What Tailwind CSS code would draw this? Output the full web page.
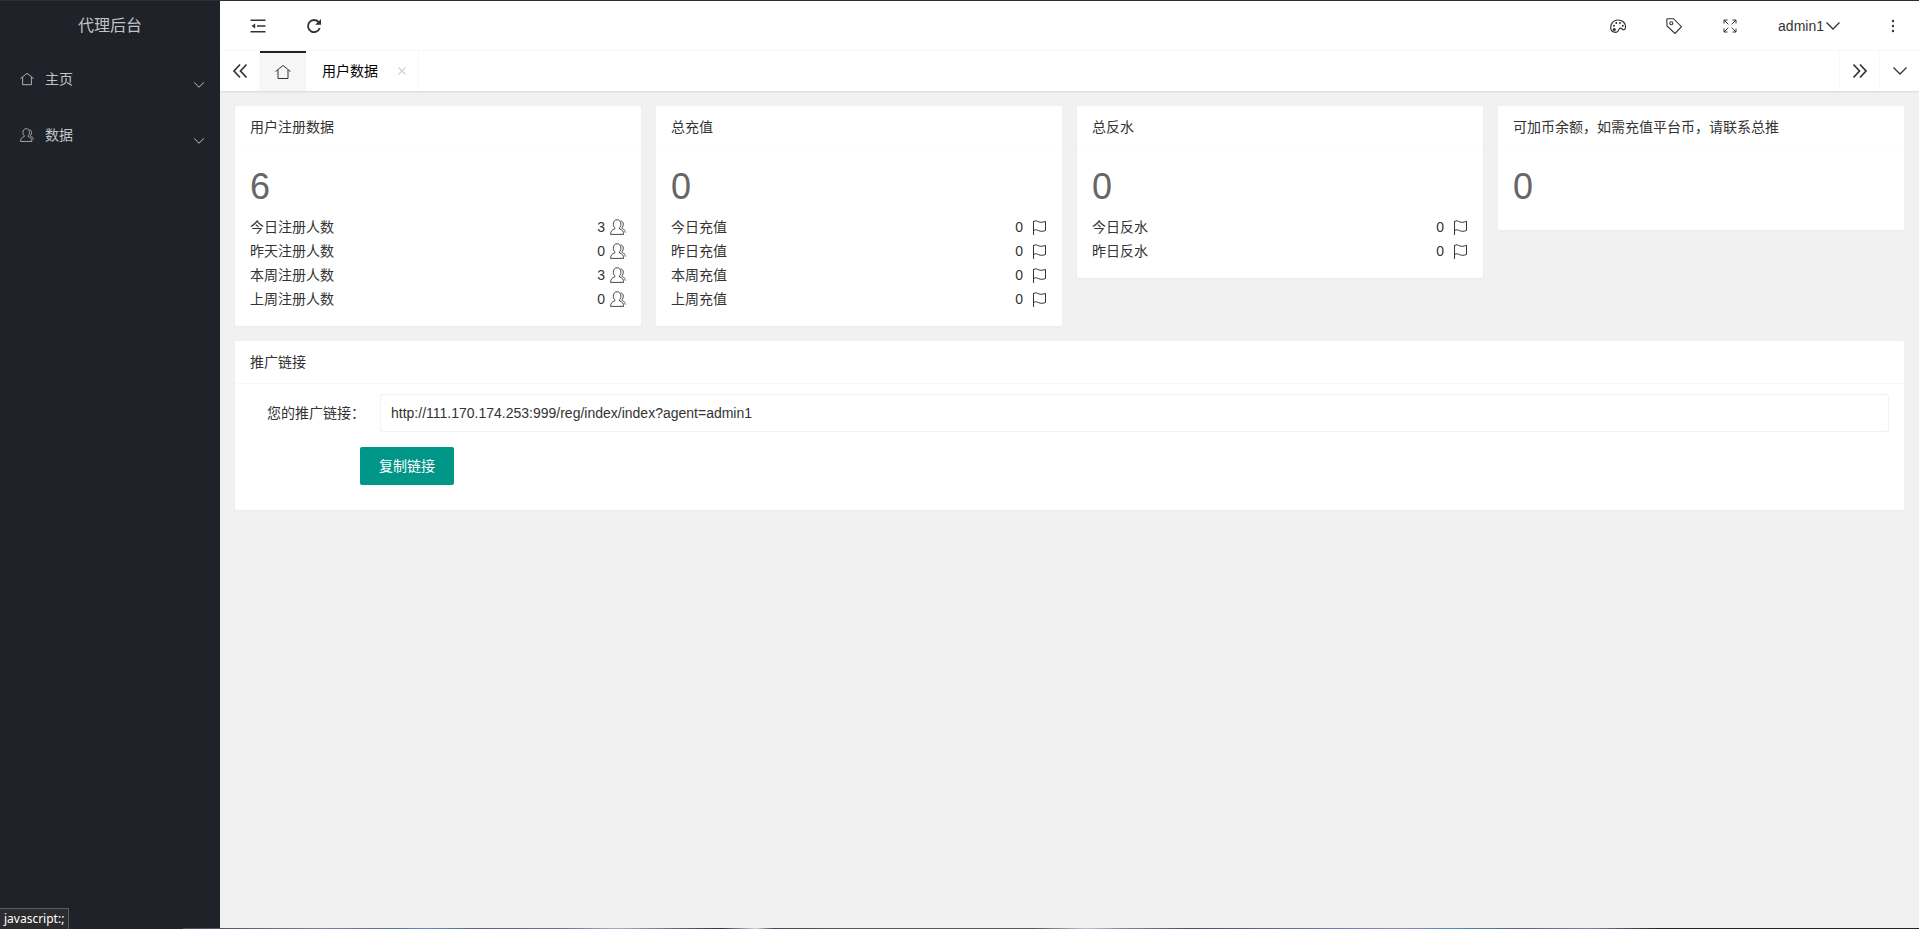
<!DOCTYPE html>
<html lang="zh-CN">
<head>
  <meta charset="UTF-8" />
  <meta name="viewport" content="width=device-width, initial-scale=1.0"/>
  <title>代理后台</title>
  <script src="https://cdn.jsdelivr.net/npm/@tailwindcss/browser@4"></script>
</head>
<body class="relative min-h-screen flex flex-col border-t border-[#2f2e35] bg-[#f1f1f1] font-['Liberation_Sans','Noto_Sans_CJK_SC',sans-serif] text-sm text-[#333]">

  <!-- Icon symbols -->
  <svg class="hidden">
    <symbol id="home" viewBox="0 0 16 16" fill="none" stroke="currentColor">
      <path d="M.5 7.500 8 1.500l7.500 6M3 6v8.500h10V6"/>
    </symbol>
    <symbol id="user" viewBox="0 0 16 16" fill="none" stroke="currentColor" stroke-width=".9">
      <path d="M.6 15.400h13c0-3-1.300-4.600-4.300-5.600v-.9c1-.8 1.600-2.100 1.600-3.700C10.900 2.600 9.400.7 7.100.7S3.300 2.600 3.300 5.200c0 1.600.6 2.900 1.600 3.700v.9C1.900 10.800.6 12.400.6 15.400z"/>
      <path d="M10.800 1.800c1.700.5 2.500 1.700 2.500 3.400 0 1.500-.5 2.600-1.400 3.400v.6"/>
      <path d="M11.900 9.200c2.300.9 3.400 2.200 3.600 4.600" stroke-width="1.200" opacity=".6"/>
    </symbol>
    <symbol id="flag" viewBox="0 0 16 16" fill="none" stroke="currentColor">
      <path d="M2.500 16V2M2.500 2.500c2.200-1.300 3.800-.3 5.300.4 1.700.7 4 .6 6.700-.6v9.200c-2.700 1.100-5 1-6.700.2-1.500-.7-3.100-1.500-5.300-.2"/>
    </symbol>
    <symbol id="down" viewBox="0 0 16 16" fill="none" stroke="currentColor" stroke-width="1.300">
      <path d="m1.500 4.500 6.500 6.500 6.500-6.500"/>
    </symbol>
    <symbol id="prev" viewBox="0 0 16 16" fill="none" stroke="currentColor" stroke-width="1.700">
      <path d="M8 1.500 2 8l6 6.500M14.500 1.500 8.500 8l6 6.500"/>
    </symbol>
  </svg>

  <div class="flex flex-1">
    <!-- Sidebar -->
    <aside class="w-[220px] shrink-0 flex flex-col bg-[#20222a] text-[#c3c4c7]">
      <div class="h-[50px] flex items-center justify-center text-base">代理后台</div>
      <nav class="flex-1">
        <a href="#" class="h-14 flex items-center pl-5 pr-[15px]">
          <svg class="size-[14px] mr-[11px]"><use href="#home"/></svg>
          <span class="flex-1">主页</span>
          <svg class="size-3 mt-3"><use href="#down" stroke-width="2"/></svg>
        </a>
        <a href="#" class="h-14 flex items-center pl-5 pr-[15px]">
          <svg class="size-[14px] mr-[11px]"><use href="#user"/></svg>
          <span class="flex-1">数据</span>
          <svg class="size-3 mt-3"><use href="#down"/></svg>
        </a>
      </nav>
      <div class="self-start h-[21px] px-1 border-t border-r border-[#5b5c62] bg-[#2c2c2f] font-['Noto_Sans',sans-serif] text-xs leading-5 text-white">javascript:;</div>
    </aside>

    <div class="flex-1 min-w-0">
      <!-- Header -->
      <header class="h-[50px] flex items-center justify-between bg-white border-b border-[#f8f8f8] pl-[30px] pr-[18px]">
        <div class="flex items-center gap-10">
          <button type="button" aria-label="侧边伸缩">
            <svg class="size-4" viewBox="0 0 16 16" fill="none" stroke="currentColor" stroke-width="1.600"><path d="M.5 2.200h15M7 8h8.500M.5 13.800h15"/><path d="M5.200 5.500v5L1.500 8z" fill="currentColor" stroke="none"/></svg>
          </button>
          <button type="button" aria-label="刷新">
            <svg class="size-4" viewBox="0 0 16 16" fill="none" stroke="currentColor" stroke-width="1.900"><path d="M13.700 10A6 6 0 1 1 12.600 4.200"/><path d="M15 1v5.800H9.200z" fill="currentColor" stroke="none"/></svg>
          </button>
        </div>
        <div class="flex items-center gap-10">
          <button type="button" aria-label="主题">
            <svg class="size-4" viewBox="0 0 16 16" fill="none" stroke="currentColor" stroke-width="1.200"><path d="M1.200 12C-.5 7.500 2.500 2 8 2c4.500 0 7.500 3 7.500 7 0 1.800-.5 2.800-1.700 2.800-1.500 0-1.800-1.600-3.300-1.600-2.300 0-1.300 4.100-4.500 4.100-2.300 0-3.900-.6-4.800-2.300z"/><g fill="currentColor" stroke="none"><circle cx="4.300" cy="11.500" r="1.500"/><circle cx="4" cy="7.700" r="1"/><circle cx="6.300" cy="4.900" r="1"/><circle cx="10" cy="4.900" r="1"/><circle cx="12.800" cy="7.700" r="1"/></g></svg>
          </button>
          <button type="button" aria-label="便签">
            <svg class="size-4" viewBox="0 0 16 16" fill="none" stroke="currentColor" stroke-width="1.100"><path d="M.8 1.500Q.8.700 1.600.7h5.900l8 8-6.500 6.800L1 8z"/><circle cx="5.300" cy="5.200" r="1.500"/></svg>
          </button>
          <button type="button" aria-label="全屏">
            <svg class="size-4" viewBox="0 0 16 16" fill="none" stroke="currentColor"><path d="M2 5.500V2h3.500M2 2l4.300 4.300M10.500 2H14v3.500M14 2 9.700 6.300M2 10.500V14h3.500M2 14l4.300-4.300M14 10.500V14h-3.500M14 14l-4.300-4.300"/></svg>
          </button>
          <button type="button" class="flex items-center gap-px">
            <span>admin1</span>
            <svg class="size-4"><use href="#down"/></svg>
          </button>
          <button type="button" aria-label="更多" class="ml-1">
            <svg class="size-4" viewBox="0 0 16 16" fill="currentColor"><circle cx="8" cy="3" r="1.200"/><circle cx="8" cy="8" r="1.200"/><circle cx="8" cy="13" r="1.200"/></svg>
          </button>
        </div>
      </header>

      <!-- Page tabs -->
      <div class="h-10 flex bg-white shadow-[0_1px_2px_rgba(0,0,0,0.1)]">
        <button type="button" aria-label="向左" class="w-10 flex items-center justify-center border-r border-[#f8f8f8]">
          <svg class="size-4"><use href="#prev"/></svg>
        </button>
        <a href="#" aria-label="主页" class="w-[46px] flex items-center justify-center border-t-2 border-[#20222a] bg-[#f6f6f6]">
          <svg class="size-4"><use href="#home"/></svg>
        </a>
        <div class="flex items-center pl-4 pr-2 border-r border-[#f8f8f8]">
          <a href="#" class="text-black">用户数据</a>
          <button type="button" aria-label="关闭" class="ml-4 text-[#d2d2d2]">
            <svg class="size-4" viewBox="0 0 16 16" fill="none" stroke="currentColor" stroke-width="1.300"><path d="m4.500 4.500 7 7m0-7-7 7"/></svg>
          </button>
        </div>
        <button type="button" aria-label="向右" class="w-10 ml-auto flex items-center justify-center border-l border-[#f8f8f8]">
          <svg class="size-4 rotate-180"><use href="#prev"/></svg>
        </button>
        <button type="button" aria-label="标签操作" class="w-10 flex items-center justify-center border-l border-[#f8f8f8]">
          <svg class="size-4"><use href="#down"/></svg>
        </button>
      </div>

      <!-- Content -->
      <main class="p-[15px] flex flex-col gap-[15px]">
        <div class="grid grid-cols-4 items-start gap-[15px]">
          <section class="bg-white rounded-xs shadow-[0_1px_2px_rgba(0,0,0,0.03)]">
            <h2 class="px-[15px] leading-[42px] border-b border-[#fbfbfb]">用户注册数据</h2>
            <div class="p-[15px] leading-6">
              <p class="pt-[5px] pb-[10px] text-4xl leading-9 text-[#666]">6</p>
              <p class="flex items-center">今日注册人数<span class="ml-auto">3</span><svg class="size-4 ml-[5px]"><use href="#user"/></svg></p>
              <p class="flex items-center">昨天注册人数<span class="ml-auto">0</span><svg class="size-4 ml-[5px]"><use href="#user"/></svg></p>
              <p class="flex items-center">本周注册人数<span class="ml-auto">3</span><svg class="size-4 ml-[5px]"><use href="#user"/></svg></p>
              <p class="flex items-center">上周注册人数<span class="ml-auto">0</span><svg class="size-4 ml-[5px]"><use href="#user"/></svg></p>
            </div>
          </section>

          <section class="bg-white rounded-xs shadow-[0_1px_2px_rgba(0,0,0,0.03)]">
            <h2 class="px-[15px] leading-[42px] border-b border-[#fbfbfb]">总充值</h2>
            <div class="p-[15px] leading-6">
              <p class="pt-[5px] pb-[10px] text-4xl leading-9 text-[#666]">0</p>
              <p class="flex items-center">今日充值<span class="ml-auto">0</span><svg class="size-4 ml-2"><use href="#flag"/></svg></p>
              <p class="flex items-center">昨日充值<span class="ml-auto">0</span><svg class="size-4 ml-2"><use href="#flag"/></svg></p>
              <p class="flex items-center">本周充值<span class="ml-auto">0</span><svg class="size-4 ml-2"><use href="#flag"/></svg></p>
              <p class="flex items-center">上周充值<span class="ml-auto">0</span><svg class="size-4 ml-2"><use href="#flag"/></svg></p>
            </div>
          </section>

          <section class="bg-white rounded-xs shadow-[0_1px_2px_rgba(0,0,0,0.03)]">
            <h2 class="px-[15px] leading-[42px] border-b border-[#fbfbfb]">总反水</h2>
            <div class="p-[15px] leading-6">
              <p class="pt-[5px] pb-[10px] text-4xl leading-9 text-[#666]">0</p>
              <p class="flex items-center">今日反水<span class="ml-auto">0</span><svg class="size-4 ml-2"><use href="#flag"/></svg></p>
              <p class="flex items-center">昨日反水<span class="ml-auto">0</span><svg class="size-4 ml-2"><use href="#flag"/></svg></p>
            </div>
          </section>

          <section class="bg-white rounded-xs shadow-[0_1px_2px_rgba(0,0,0,0.03)]">
            <h2 class="px-[15px] leading-[42px] border-b border-[#fbfbfb]">可加币余额，如需充值平台币，请联系总推</h2>
            <div class="p-[15px]">
              <p class="pt-[5px] pb-[10px] text-4xl leading-9 text-[#666]">0</p>
            </div>
          </section>
        </div>

        <!-- Promotion link -->
        <section class="bg-white rounded-xs shadow-[0_1px_2px_rgba(0,0,0,0.03)]">
          <h2 class="px-[15px] leading-[42px] border-b border-[#f8f8f8]">推广链接</h2>
          <form class="px-[15px] pt-[10px] pb-[25px]">
            <div class="flex items-center mb-[15px]">
              <label for="agentLink" class="w-[130px] pr-[15px] text-right">您的推广链接：</label>
              <input type="text" id="agentLink" value="http://111.170.174.253:999/reg/index/index?agent=admin1" class="flex-1 h-[38px] px-[10px] border border-[#f2f2f2] rounded-xs">
            </div>
            <button type="button" id="copyBtn" class="block ml-[110px] h-[38px] px-[19px] rounded-xs bg-[#009688] text-white">复制链接</button>
          </form>
        </section>
      </main>
    </div>
  </div>

  <!-- Coloured strip along the bottom edge -->
  <div class="absolute bottom-0 left-[183px] right-0 h-px bg-[linear-gradient(90deg,#4a4560_0%,#7f7f9a_8%,#5b6f9a_12%,#5b8fd0_14%,#60607c_17%,#70709a_22%,#b0a8c0_25%,#70708c_28%,#303048_31%,#c8d0e0_33%,#484860_34%,#60505c_38%,#60505c_49%,#c0c0d8_52%,#8888a0_54%,#485068_58%,#7080c0_67%,#a080c0_70%,#4a90c8_73%,#606080_77%,#8080a0_81%,#282030_85%,#282030_100%)]"></div>

  <script>
    document.getElementById("copyBtn").addEventListener("click", () => {
      document.getElementById("agentLink").select();
      document.execCommand("copy");
    });
  </script>

</body>
</html>
